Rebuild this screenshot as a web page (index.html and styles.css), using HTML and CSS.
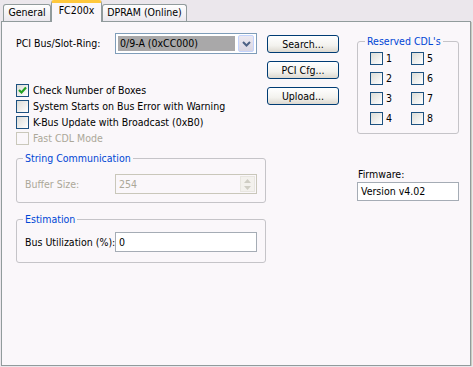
FILE: index.html
```html
<!DOCTYPE html>
<html lang="en">
<head>
    <meta charset="UTF-8">
    <title>FC200x</title>
    <link rel="stylesheet" href="styles.css">
</head>
<body>

<div class="tabs">
    <div class="tab tab-general">General</div>
    <div class="tab tab-active">FC200x</div>
    <div class="tab tab-dpram">DPRAM (Online)</div>
</div>

<div class="panel">
    <div class="col-left">
        <div class="field-row">
            <span class="field-label">PCI Bus/Slot-Ring:</span>
            <div class="combo">
                <span class="combo-value">0/9-A (0xCC000)</span>
                <span class="combo-btn">
                    <svg width="9" height="6" viewBox="0 0 9 6"><path d="M1 1 L4.5 4.5 L8 1" fill="none" stroke="#4d6185" stroke-width="2"/></svg>
                </span>
            </div>
        </div>

        <div class="checks">
            <div class="check">
                <span class="box">
                    <svg width="11" height="11" viewBox="0 0 11 11"><path d="M2 5 L4.5 7.5 L9 2.5" fill="none" stroke="#21a121" stroke-width="2.2"/></svg>
                </span>
                Check Number of Boxes
            </div>
            <div class="check"><span class="box"></span>System Starts on Bus Error with Warning</div>
            <div class="check"><span class="box"></span>K-Bus Update with Broadcast (0xB0)</div>
            <div class="check check-disabled"><span class="box"></span>Fast CDL Mode</div>
        </div>

        <fieldset class="group group-string">
            <legend>String Communication</legend>
            <div class="field-row field-row-disabled">
                <span class="field-label">Buffer Size:</span>
                <div class="edit edit-disabled">
                    254
                    <span class="spin">
                        <svg width="7" height="4" viewBox="0 0 7 4"><path d="M0 4 L3.5 0 L7 4 Z" fill="#cfcdc4"/></svg>
                        <svg width="7" height="4" viewBox="0 0 7 4"><path d="M0 0 L3.5 4 L7 0 Z" fill="#cfcdc4"/></svg>
                    </span>
                </div>
            </div>
        </fieldset>

        <fieldset class="group group-est">
            <legend>Estimation</legend>
            <div class="field-row">
                <span class="field-label">Bus Utilization (%):</span>
                <div class="edit">0</div>
            </div>
        </fieldset>
    </div>

    <div class="col-buttons">
        <button class="btn">Search...</button>
        <button class="btn">PCI Cfg...</button>
        <button class="btn">Upload...</button>
    </div>

    <div class="col-right">
        <fieldset class="group group-cdl">
            <legend>Reserved CDL's</legend>
            <div class="cdl-grid">
                <div class="check"><span class="box"></span>1</div>
                <div class="check"><span class="box"></span>2</div>
                <div class="check"><span class="box"></span>3</div>
                <div class="check"><span class="box"></span>4</div>
                <div class="check"><span class="box"></span>5</div>
                <div class="check"><span class="box"></span>6</div>
                <div class="check"><span class="box"></span>7</div>
                <div class="check"><span class="box"></span>8</div>
            </div>
        </fieldset>

        <div class="firmware">
            <div class="firmware-label">Firmware:</div>
            <div class="edit edit-firmware">Version v4.02</div>
        </div>
    </div>
</div>

</body>
</html>
```

FILE: styles.css
```css
body {
    font-family: "DejaVu Sans Condensed", "DejaVu Sans", sans-serif;
    font-stretch: condensed;
    font-size: 10.5px;
    line-height: 13px;
    color: black;
    background-color: #ebe7ec;
    margin: 0px;
    padding: 0px 0px 0px 1px;
}

/* tab strip */
.tabs {
    display: flex;
    align-items: flex-end;
    height: 21px;
    padding-left: 2px;
}
.tab {
    height: 16px;
    line-height: 15px;
    box-sizing: content-box;
    text-align: center;
    white-space: nowrap;
    border: 1px solid #919b9c;
    border-bottom: none;
    border-radius: 3px 3px 0px 0px;
    background: linear-gradient(#fefefe, #ebe8ee);
}
.tab-general {
    width: 46px;
}
.tab-dpram {
    width: 83px;
}
.tab-active {
    position: relative;
    width: 49px;
    height: 19px;
    line-height: 15px;
    margin-bottom: -1px;
    border-top: 3px solid #ffc83c;
    background: #faf7fa;
    z-index: 1;
}

/* page panel */
.panel {
    display: flex;
    width: 470px;
    height: 345px;
    box-sizing: border-box;
    padding: 11px 0px 0px 14px;
    border: 1px solid #919b9c;
    background-color: #faf7fa;
    box-shadow: 1px 1px 0px #c9ccc0;
}

.col-left {
    width: 250px;
}
.col-buttons {
    display: flex;
    flex-direction: column;
    gap: 8px;
    width: 72px;
    margin: 2px 0px 0px 1px;
}
.col-right {
    width: 102px;
    margin-left: 18px;
}

/* label + input rows */
.field-row {
    display: flex;
    justify-content: space-between;
    align-items: center;
}
.field-label {
    flex: 1 1 0px;
    min-width: 0px;
    white-space: nowrap;
}
.col-left > .field-row {
    padding-right: 9px;
}
.field-row-disabled {
    color: #aca899;
}

.combo {
    display: flex;
    align-items: center;
    flex-shrink: 0;
    width: 142px;
    height: 21px;
    box-sizing: border-box;
    padding: 2px;
    border: 1px solid #7f9db9;
    background: white;
}
.combo-value {
    flex: 1;
    height: 15px;
    line-height: 15px;
    padding-left: 2px;
    margin-right: 3px;
    background-color: #a9a8a9;
}
.combo-btn {
    display: flex;
    align-items: center;
    justify-content: center;
    width: 16px;
    height: 17px;
    border: 1px solid #c3d3fd;
    border-radius: 2px;
    background: linear-gradient(#ece9f1, #d9d6e2);
    box-sizing: border-box;
}

.edit {
    display: flex;
    align-items: center;
    flex-shrink: 0;
    width: 142px;
    height: 20px;
    box-sizing: border-box;
    padding-left: 3px;
    border: 1px solid #a5acb5;
    background: white;
}
.edit-disabled {
    border-color: #c9c7ba;
    background: #faf7fa;
}
.spin {
    display: flex;
    flex-direction: column;
    align-items: center;
    justify-content: space-around;
    width: 15px;
    height: 16px;
    margin-left: auto;
    margin-right: 1px;
    border: 1px solid #e8e6e0;
    background: #f3f1ed;
    box-sizing: border-box;
}

/* check boxes */
.checks {
    margin-top: 28px;
}
.check {
    display: flex;
    align-items: center;
    gap: 4px;
    height: 16px;
    white-space: nowrap;
}
.box {
    display: flex;
    align-items: center;
    justify-content: center;
    flex-shrink: 0;
    width: 13px;
    height: 13px;
    box-sizing: border-box;
    border: 1px solid #1c5180;
    background: linear-gradient(135deg, #dcdcd7, #ffffff);
}
.check-disabled {
    color: #aca899;
}
.check-disabled .box {
    border-color: #cac8bb;
    background: #faf7fa;
}

/* group boxes */
.group {
    margin: 0px;
    padding: 0px 8px 8px 8px;
    border: 1px solid #c5c4c8;
    border-radius: 3px;
    min-width: 0px;
}
.group legend {
    color: #0046d5;
    padding: 0px 2px;
    margin-left: -2px;
    line-height: 13px;
}
.group-string {
    margin-top: 6px;
    padding-top: 9px;
    padding-bottom: 8px;
}
.group-est {
    margin-top: 10px;
    padding-top: 6px;
    padding-bottom: 10px;
}
.group-cdl {
    margin-top: 2px;
    padding: 0px 0px 5px 12px;
}
.group-cdl legend {
    margin-left: -5px;
}
.cdl-grid {
    display: grid;
    grid-template-columns: 41px 41px;
    grid-template-rows: repeat(4, 20px);
    grid-auto-flow: column;
}
.cdl-grid .check {
    height: 20px;
    gap: 3px;
}

/* buttons */
.btn {
    height: 18px;
    padding: 0px;
    font-family: "DejaVu Sans Condensed", "DejaVu Sans", sans-serif;
    font-stretch: condensed;
    font-size: 10.5px;
    color: black;
    border: 1px solid #003c74;
    border-radius: 3px;
    background: linear-gradient(#ffffff, #f3f2ee 60%, #dcd8cf);
}

.firmware {
    margin-top: 34px;
}
.firmware-label {
    margin-left: 1px;
    margin-bottom: 1px;
}
.edit-firmware {
    width: 102px;
    height: 19px;
}
```
